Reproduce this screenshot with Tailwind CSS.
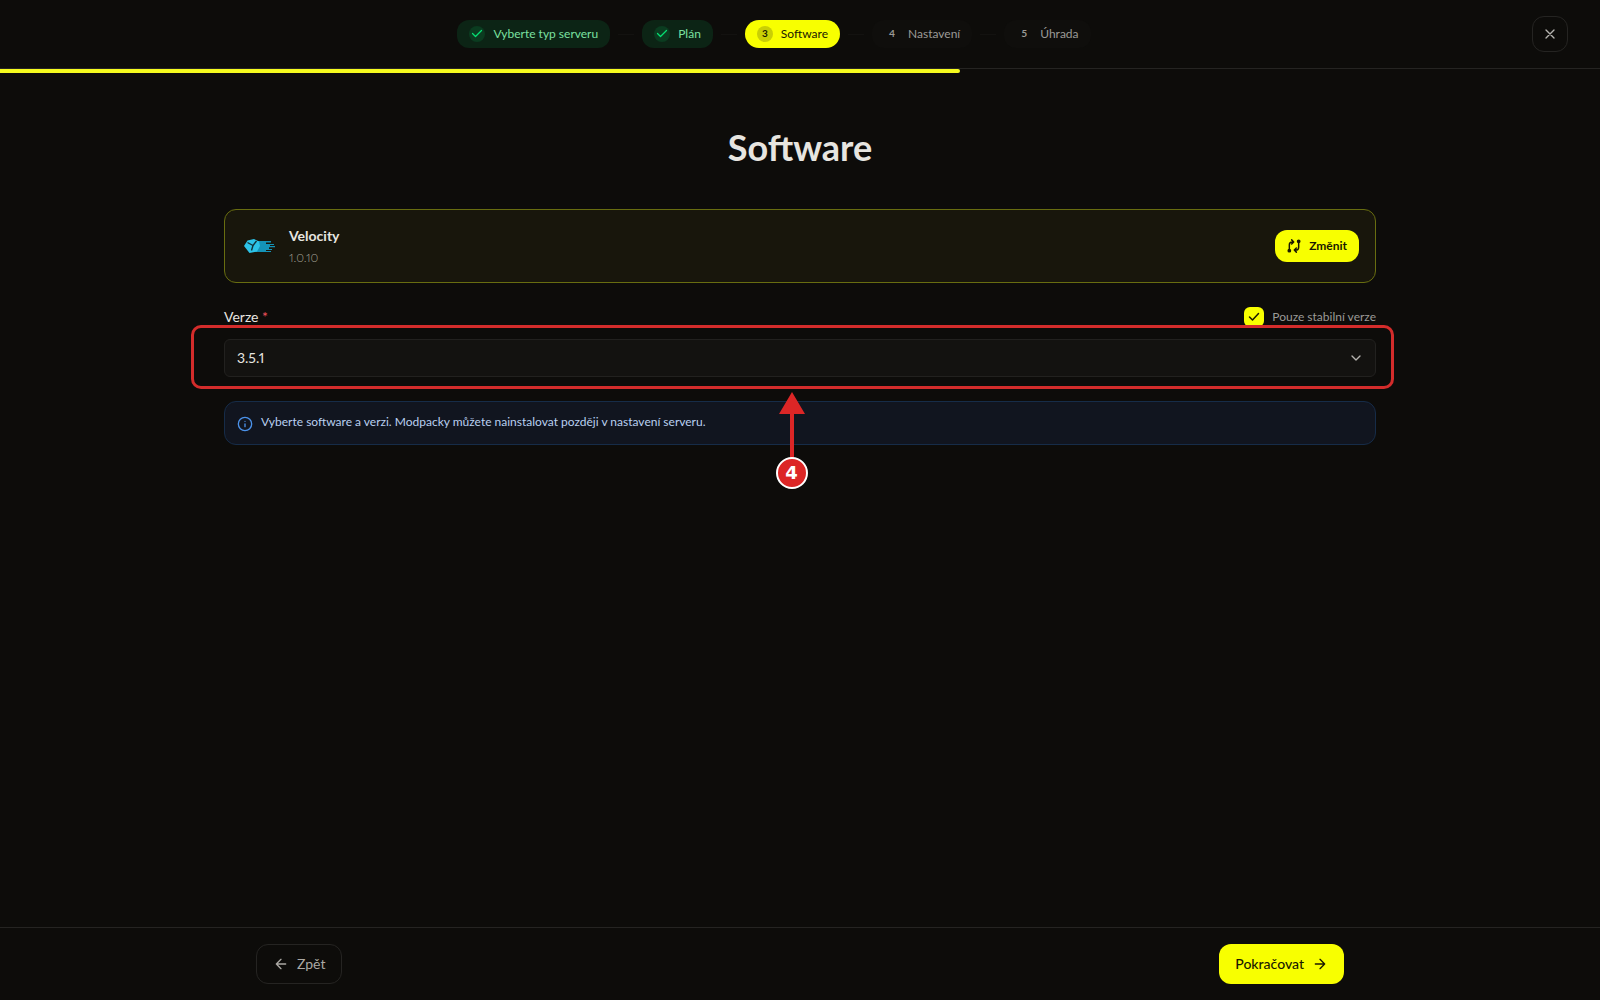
<!DOCTYPE html>
<html lang="cs">
<head>
<meta charset="utf-8">
<meta name="viewport" content="width=device-width, initial-scale=1">
<title>Software</title>
<script src="https://cdn.jsdelivr.net/npm/@tailwindcss/browser@4"></script>
</head>
<body class="flex min-h-screen flex-col bg-[#0d0c0a] font-['Lato','Noto_Sans',sans-serif] text-[#e7e5e0] proportional-nums">

<header class="relative flex items-center gap-4 border-b border-[#252422] px-8 py-4">
  <nav aria-label="Kroky" class="flex flex-1 justify-center">
    <ol class="flex items-center gap-2 text-xs">
      <li class="flex h-7 items-center gap-2 rounded-xl bg-[#0c2415] px-3 text-[#7be0a0]">
        <span class="flex size-4 items-center justify-center rounded-full bg-[#0b3c20]">
          <svg class="size-3" viewBox="0 0 24 24" fill="none" stroke="#05df72" stroke-width="2.5" stroke-linecap="round" stroke-linejoin="round"><path d="M21 5 9 17l-6-6"/></svg>
        </span>
        Vyberte typ serveru
      </li>
      <li aria-hidden="true" class="h-px w-4 bg-[#131210]"></li>
      <li class="flex h-7 items-center gap-2 rounded-xl bg-[#0c2415] px-3 text-[#7be0a0]">
        <span class="flex size-4 items-center justify-center rounded-full bg-[#0b3c20]">
          <svg class="size-3" viewBox="0 0 24 24" fill="none" stroke="#05df72" stroke-width="2.5" stroke-linecap="round" stroke-linejoin="round"><path d="M21 5 9 17l-6-6"/></svg>
        </span>
        Plán
      </li>
      <li aria-hidden="true" class="h-px w-4 bg-[#131210]"></li>
      <li aria-current="step" class="flex h-7 items-center gap-2 rounded-full bg-[#f8ff00] px-3 text-[#1a1900]">
        <span class="flex size-4 items-center justify-center rounded-full bg-[#c9cf05] text-[10px] font-bold">3</span>
        Software
      </li>
      <li aria-hidden="true" class="h-px w-4 bg-[#131210]"></li>
      <li class="flex h-7 items-center gap-2 rounded-xl bg-[#0f0e0c] px-3 text-[#9b9a97]">
        <span class="flex size-4 items-center justify-center text-[10px] font-bold">4</span>
        Nastavení
      </li>
      <li aria-hidden="true" class="h-px w-4 bg-[#131210]"></li>
      <li class="flex h-7 items-center gap-2 rounded-xl bg-[#0f0e0c] px-3 text-[#9b9a97]">
        <span class="flex size-4 items-center justify-center text-[10px] font-bold">5</span>
        Úhrada
      </li>
    </ol>
  </nav>
  <button type="button" aria-label="Zavřít" class="flex size-9 items-center justify-center rounded-xl border border-[#252422] text-[#b5b3af]">
    <svg class="size-4" viewBox="0 0 24 24" fill="none" stroke="currentColor" stroke-width="2" stroke-linecap="round"><path d="M18 6 6 18M6 6l12 12"/></svg>
  </button>
  <div class="absolute top-full left-0 mt-px h-1 w-3/5 rounded-r-full bg-[#f5fb1e]"></div>
</header>

<main class="mx-auto flex w-full max-w-6xl flex-1 flex-col pt-[58px] pb-10">
  <h1 class="mb-[42px] text-center text-4xl leading-10 font-bold">Software</h1>

  <div class="flex flex-col gap-6">
    <section class="flex items-center gap-3 rounded-xl border border-[#686d10] bg-[#18160c] px-4 py-4">
      <span class="flex h-10 w-9 items-center justify-center">
        <svg class="size-8" viewBox="0 0 32 32" fill="none">
          <path fill="#1493b8" d="M12 11h16v1.500h-5V14h8v1h-4v1h5v1.200h-6V19h3v1h-6v1h5v1H12z"/>
          <path fill="#2cc3e8" d="M4.500 10.500 11 9l5 2.500L17 16l-3 5.500L6.500 23 1 16z"/>
          <path stroke="#12323a" stroke-width="1.400" d="m4.500 12.500 5.500 3M10 15.500 13.500 11M10 15.500 8.500 20.500"/>
        </svg>
      </span>
      <div class="flex flex-1 flex-col gap-1">
        <h2 class="text-sm font-bold leading-5">Velocity</h2>
        <p class="text-xs font-light leading-4 text-[#a5a498]">1.0.10</p>
      </div>
      <button type="button" class="flex h-8 items-center gap-2 rounded-xl bg-[#f8ff00] px-3 text-xs font-bold text-[#1a1900]">
        <svg class="size-3.5" viewBox="0 0 24 24" fill="none" stroke="currentColor" stroke-width="2.500" stroke-linecap="round" stroke-linejoin="round"><circle cx="4" cy="20" r="2" fill="currentColor"/><circle cx="20" cy="4" r="2" fill="currentColor"/><path d="M4 17v-7c0-3 2-5 5-5h2M8 1.500 11.500 5 8 8.500M20 7v7c0 3-2 5-5 5h-2M16 15.500 12.500 19l3.500 3.500"/></svg>
        Změnit
      </button>
    </section>

    <section class="flex flex-col gap-3">
      <div class="flex h-5 items-center justify-between">
        <label for="verze" class="text-sm leading-5">Verze <span class="text-[#f0525c]">*</span></label>
        <label class="flex items-center gap-2 text-xs text-[#9b9a97]">
          <span class="relative flex size-5">
            <input type="checkbox" checked class="size-5 appearance-none rounded-md bg-[#f8ff00]">
            <svg class="pointer-events-none absolute inset-0 m-auto size-3" viewBox="0 0 24 24" fill="none" stroke="#1a1900" stroke-width="3" stroke-linecap="round" stroke-linejoin="round"><path d="M21 5 9 18l-6-6"/></svg>
          </span>
          Pouze stabilní verze
        </label>
      </div>
      <div class="relative">
        <select id="verze" class="block h-[38px] w-full appearance-none rounded-md border border-[#22211f] bg-[#131210] px-3 text-sm text-[#e7e5e0]">
          <option>3.5.1</option>
        </select>
        <svg class="pointer-events-none absolute inset-y-0 right-3 my-auto size-4" viewBox="0 0 24 24" fill="none" stroke="#b5b3af" stroke-width="2" stroke-linecap="round" stroke-linejoin="round"><path d="m6 9 6 6 6-6"/></svg>
        <div class="pointer-events-none absolute -top-3.5 -right-[18px] -bottom-3 -left-[33px] z-10 rounded-[10px] border-3 border-[#d32c2b]">
          <div class="absolute inset-x-0 top-full mt-1.5 mr-0.5 flex flex-col items-center">
            <svg class="h-[66px] w-[26px]" viewBox="0 0 26 66" fill="#dc2626"><path d="M13 0 26 22H15v44h-4V22H0z"/></svg>
            <span class="-mt-px flex size-8 items-center justify-center rounded-full border-2 border-white bg-[#dc2626] font-['DejaVu_Sans',sans-serif] text-lg font-bold text-white">4</span>
          </div>
        </div>
      </div>
    </section>

    <section class="flex items-start gap-2 rounded-xl border border-[#162c48] bg-[#11151f] p-3 text-xs text-[#b9d0f0]">
      <svg class="mt-0.5 size-4" viewBox="0 0 24 24" fill="none" stroke="#4b92ea" stroke-width="2" stroke-linecap="round" stroke-linejoin="round"><circle cx="12" cy="12" r="10"/><path d="M12 16v-4M12 8h.01"/></svg>
      <p>Vyberte software a verzi. Modpacky můžete nainstalovat později v nastavení serveru.</p>
    </section>
  </div>
</main>

<footer class="border-t border-[#252422] py-4">
  <div class="mx-auto flex max-w-6xl items-center justify-between px-8 text-sm">
    <button type="button" class="flex h-10 items-center gap-2 rounded-xl border border-[#252422] px-4 text-[#aaa8a4]">
      <svg class="size-4" viewBox="0 0 24 24" fill="none" stroke="currentColor" stroke-width="2" stroke-linecap="round" stroke-linejoin="round"><path d="m12 19-7-7 7-7M19 12H5"/></svg>
      Zpět
    </button>
    <button type="button" class="flex h-10 items-center gap-2 rounded-xl bg-[#f8ff00] px-4 font-medium text-[#1a1900]">
      Pokračovat
      <svg class="size-4" viewBox="0 0 24 24" fill="none" stroke="currentColor" stroke-width="2" stroke-linecap="round" stroke-linejoin="round"><path d="M5 12h14m-7-7 7 7-7 7"/></svg>
    </button>
  </div>
</footer>
</body>
</html>
